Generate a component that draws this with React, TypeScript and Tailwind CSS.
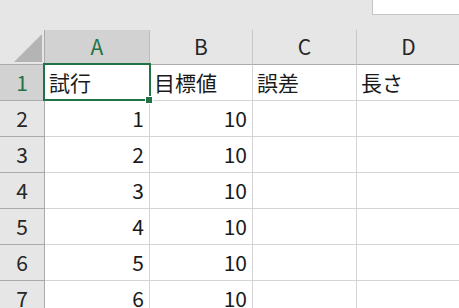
const cols = ['A', 'B', 'C', 'D']
const rows: (string | number)[][] = [
  ['試行', '目標値', '誤差', '長さ'],
  [1, 10, '', ''],
  [2, 10, '', ''],
  [3, 10, '', ''],
  [4, 10, '', ''],
  [5, 10, '', ''],
  [6, 10, '', ''],
]

const font = { fontFamily: '"Noto Sans CJK JP", "Noto Sans", sans-serif' }

export default function App() {
  return (
    <div className="w-[459px] h-[308px] overflow-hidden bg-[#e6e6e6] text-[#1a1a1a]" style={font}>
      <div className="h-[30px] flex justify-end">
        <div className="w-[87px] h-[15px] bg-white border-l border-b border-[#c6c6c6]" />
      </div>
      <div className="relative grid grid-cols-[45px_105px_103px_104px_104px] grid-rows-[35px_repeat(7,36px)]">
        <div className="bg-[#e6e6e6] border-r border-b border-[#ababab]">
          <svg width="45" height="35" viewBox="0 0 45 35">
            <polygon points="42,4 42,32 14,32" fill="#b4b4b4" />
          </svg>
        </div>
        {cols.map((c, i) => (
          <div
            key={c}
            className={`flex items-center justify-center border-b border-[#ababab] border-r text-[21px] ${
              i === 0 ? 'bg-[#d2d2d2] text-[#217346] border-r-[#bdbdbd]' : 'bg-[#e6e6e6] text-[#262626] border-r-[#c8c8c8]'
            }`}
          >
            {c}
          </div>
        ))}
        {rows.map((r, ri) => (
          <div key={ri} className="contents">
            <div
              className={`flex items-center justify-center border-r border-b border-[#ababab] text-[21px] ${
                ri === 0 ? 'bg-[#d2d2d2] text-[#217346]' : 'bg-[#e6e6e6] text-[#262626]'
              }`}
            >
              {ri + 1}
            </div>
            {r.map((v, ci) => (
              <div
                key={ci}
                className={`flex items-center bg-white border-r border-b border-[#d4d4d4] text-[21px] leading-none ${
                  typeof v === 'number' ? 'justify-end pr-[5px]' : 'justify-start pl-[4px]'
                }`}
              >
                {v}
              </div>
            ))}
          </div>
        ))}
        <div className="absolute left-[43px] top-[33px] w-[108px] h-[38px] border-2 border-[#217346] pointer-events-none" />
        <div className="absolute left-[146px] top-[67px] w-[6px] h-[6px] bg-[#217346] outline outline-1 outline-white" />
      </div>
    </div>
  )
}
